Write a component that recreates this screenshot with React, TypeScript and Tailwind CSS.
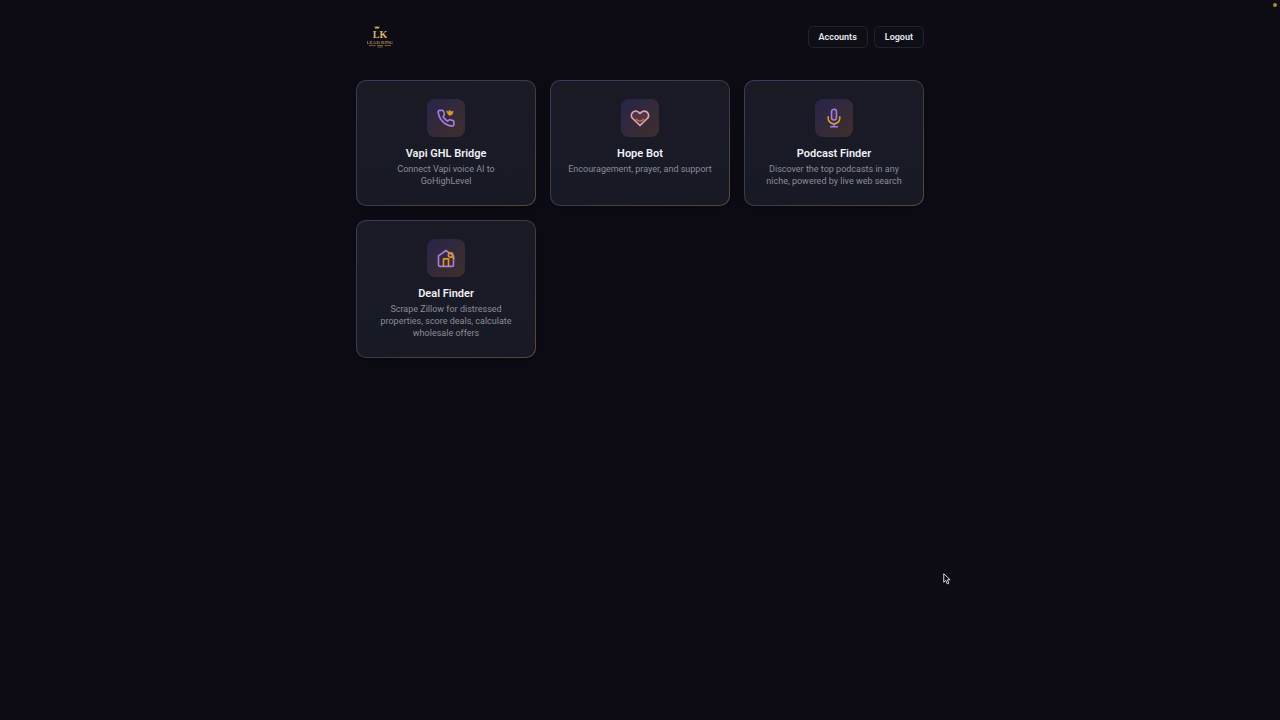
import type { ReactNode } from 'react';

interface Tool {
  title: string;
  description: string;
  href: string;
  icon: ReactNode;
}

const PhoneIcon = () => (
  <svg viewBox="0 0 24 24" className="size-5" fill="none" strokeLinecap="round" strokeLinejoin="round" aria-hidden="true">
    <path
      d="M21.5 17.2v2.6a2 2 0 0 1-2.2 2 18.6 18.6 0 0 1-8.1-2.9 18.3 18.3 0 0 1-5.7-5.7A18.6 18.6 0 0 1 2.6 5a2 2 0 0 1 2-2.2h2.7a2 2 0 0 1 2 1.7c.12.9.34 1.7.64 2.5a2 2 0 0 1-.45 2.1L8.4 10.2a15 15 0 0 0 5.6 5.6l1.1-1.1a2 2 0 0 1 2.1-.45c.8.3 1.6.52 2.5.64a2 2 0 0 1 1.8 2z"
      stroke="#a47bdf"
      strokeWidth="2"
    />
    <path d="M13 3.5l2.2 1.4 1-2.4 1.8 2 2.6-.4-1.2 3.6-3 1.2-2.2-1.8z" fill="#d9972e" stroke="#d9972e" strokeWidth="0.8" />
  </svg>
);

const HeartIcon = () => (
  <svg viewBox="0 0 24 24" className="size-5" fill="none" strokeLinecap="round" strokeLinejoin="round" aria-hidden="true">
    <path
      d="M20.8 5.2a5.2 5.2 0 0 0-7.4 0L12 6.6l-1.4-1.4a5.2 5.2 0 0 0-7.4 7.4L12 21l8.8-8.4a5.2 5.2 0 0 0 0-7.4z"
      fill="#ad5f70"
      fillOpacity="0.25"
      stroke="#e5a3b5"
      strokeWidth="2"
    />
    <path d="M7.5 13.5c1.5 1.8 3 2.3 4.5 2.3s3-.5 4.5-2.3" stroke="#c07a48" strokeWidth="1.5" />
  </svg>
);

const MicIcon = () => (
  <svg viewBox="0 0 24 24" className="size-5" fill="none" strokeLinecap="round" strokeLinejoin="round" aria-hidden="true">
    <rect x="9" y="1.5" width="6" height="13" rx="3" fill="#5b3c78" fillOpacity="0.4" stroke="#a47bdf" strokeWidth="1.9" />
    <path d="M5 10.5v1.5a7 7 0 0 0 14 0v-1.5" stroke="#d3a02c" strokeWidth="1.9" />
    <path d="M12 19.3v3M8 22.5h8" stroke="#a47bdf" strokeWidth="1.9" />
  </svg>
);

const HouseIcon = () => (
  <svg viewBox="0 0 24 24" className="size-5" fill="none" strokeLinecap="round" strokeLinejoin="round" aria-hidden="true">
    <path d="M3 9.5L12 3l9 6.5V20a2 2 0 0 1-2 2H5a2 2 0 0 1-2-2z" stroke="#a47bdf" strokeWidth="2" />
    <path d="M9 22v-9h6v9" stroke="#dc962b" strokeWidth="2" />
    <circle cx="17.5" cy="8.5" r="2.7" stroke="#dc962b" strokeWidth="1.9" />
    <path d="M19.5 10.5l2 2" stroke="#dc962b" strokeWidth="1.9" />
  </svg>
);

const Logo = () => (
  <svg viewBox="0 0 52 44" className="h-[22px] w-[26px]" role="img" aria-label="Lead King">
    <g fill="#d8b56a" fontFamily="'Liberation Serif', serif" textAnchor="middle">
      <path d="M15 0l3 2.5L20 0l2 2.500L25 0l-1 5h-8z" />
      <text x="26" y="24" fontSize="20" fontWeight="bold">LK</text>
      <text x="26" y="35" fontSize="10">LEAD KING</text>
    </g>
    <path d="M4 39h13M35 39h13M20 39h12M21 42h10" stroke="#9b793b" strokeWidth="1.5" />
  </svg>
);

const tools: Tool[] = [
  { title: 'Vapi GHL Bridge', description: 'Connect Vapi voice AI to GoHighLevel', href: '#vapi', icon: <PhoneIcon /> },
  { title: 'Hope Bot', description: 'Encouragement, prayer, and support', href: '#hope', icon: <HeartIcon /> },
  { title: 'Podcast Finder', description: 'Discover the top podcasts in any niche, powered by live web search', href: '#podcasts', icon: <MicIcon /> },
  { title: 'Deal Finder', description: 'Scrape Zillow for distressed properties, score deals, calculate wholesale offers', href: '#deals', icon: <HouseIcon /> },
];

function ToolCard({ title, description, href, icon }: Tool) {
  return (
    <a
      href={href}
      className="flex rounded-[10px] bg-linear-to-br from-[#3c3a62] via-[#3a3b48] to-[#5e4834] p-px shadow-[0_2px_10px_rgba(0,0,0,0.35)]"
    >
      <div className="flex w-full flex-col items-center rounded-[9px] bg-linear-to-b from-[#1a1a25] to-[#171a25] px-[15px] py-[18px] text-center">
        <div className="flex size-[38px] items-center justify-center rounded-lg bg-linear-to-br from-[#28234a] to-[#402e28]">
          {icon}
        </div>
        <h2 className="mt-2.5 text-[11px] leading-[14px] font-semibold text-[#f0f0f5]">{title}</h2>
        <p className="mt-0.5 text-[9px] leading-3 text-[#8b8c98]">{description}</p>
      </div>
    </a>
  );
}

function HeaderButton({ children }: { children: ReactNode }) {
  return (
    <button type="button" className="h-[22px] rounded-[5px] border border-[#22222e] bg-[#0e0e17] px-2.5 pt-0.5 text-[9px] font-semibold text-[#e9e9ef]">
      {children}
    </button>
  );
}

export default function App() {
  return (
    <div className="min-h-screen bg-[#0d0c15] pt-[26px] font-['Roboto','Inter',sans-serif]">
      <div className="mx-auto max-w-[568px]">
        <header className="flex items-center justify-between pl-[11px]">
          <Logo />
          <nav className="flex gap-1.5">
            <HeaderButton>Accounts</HeaderButton>
            <HeaderButton>Logout</HeaderButton>
          </nav>
        </header>
        <main className="mt-8 grid grid-cols-3 gap-3.5">
          {tools.map((tool) => (
            <ToolCard key={tool.title} {...tool} />
          ))}
        </main>
      </div>

      {/* Recording dot and mouse pointer */}
      <span className="fixed top-[3px] right-[3px] size-1 rounded-full bg-[#b58532]" />
      <svg viewBox="0 0 16 24" className="fixed top-[573px] left-[943px] h-3 w-2" aria-hidden="true">
        <path d="M1.5 1.5v17l4-3.7 3 7 3.2-1.4-3-6.8h5.6z" fill="#0a0a10" stroke="#d8d8dc" strokeWidth="2" />
      </svg>
    </div>
  );
}
